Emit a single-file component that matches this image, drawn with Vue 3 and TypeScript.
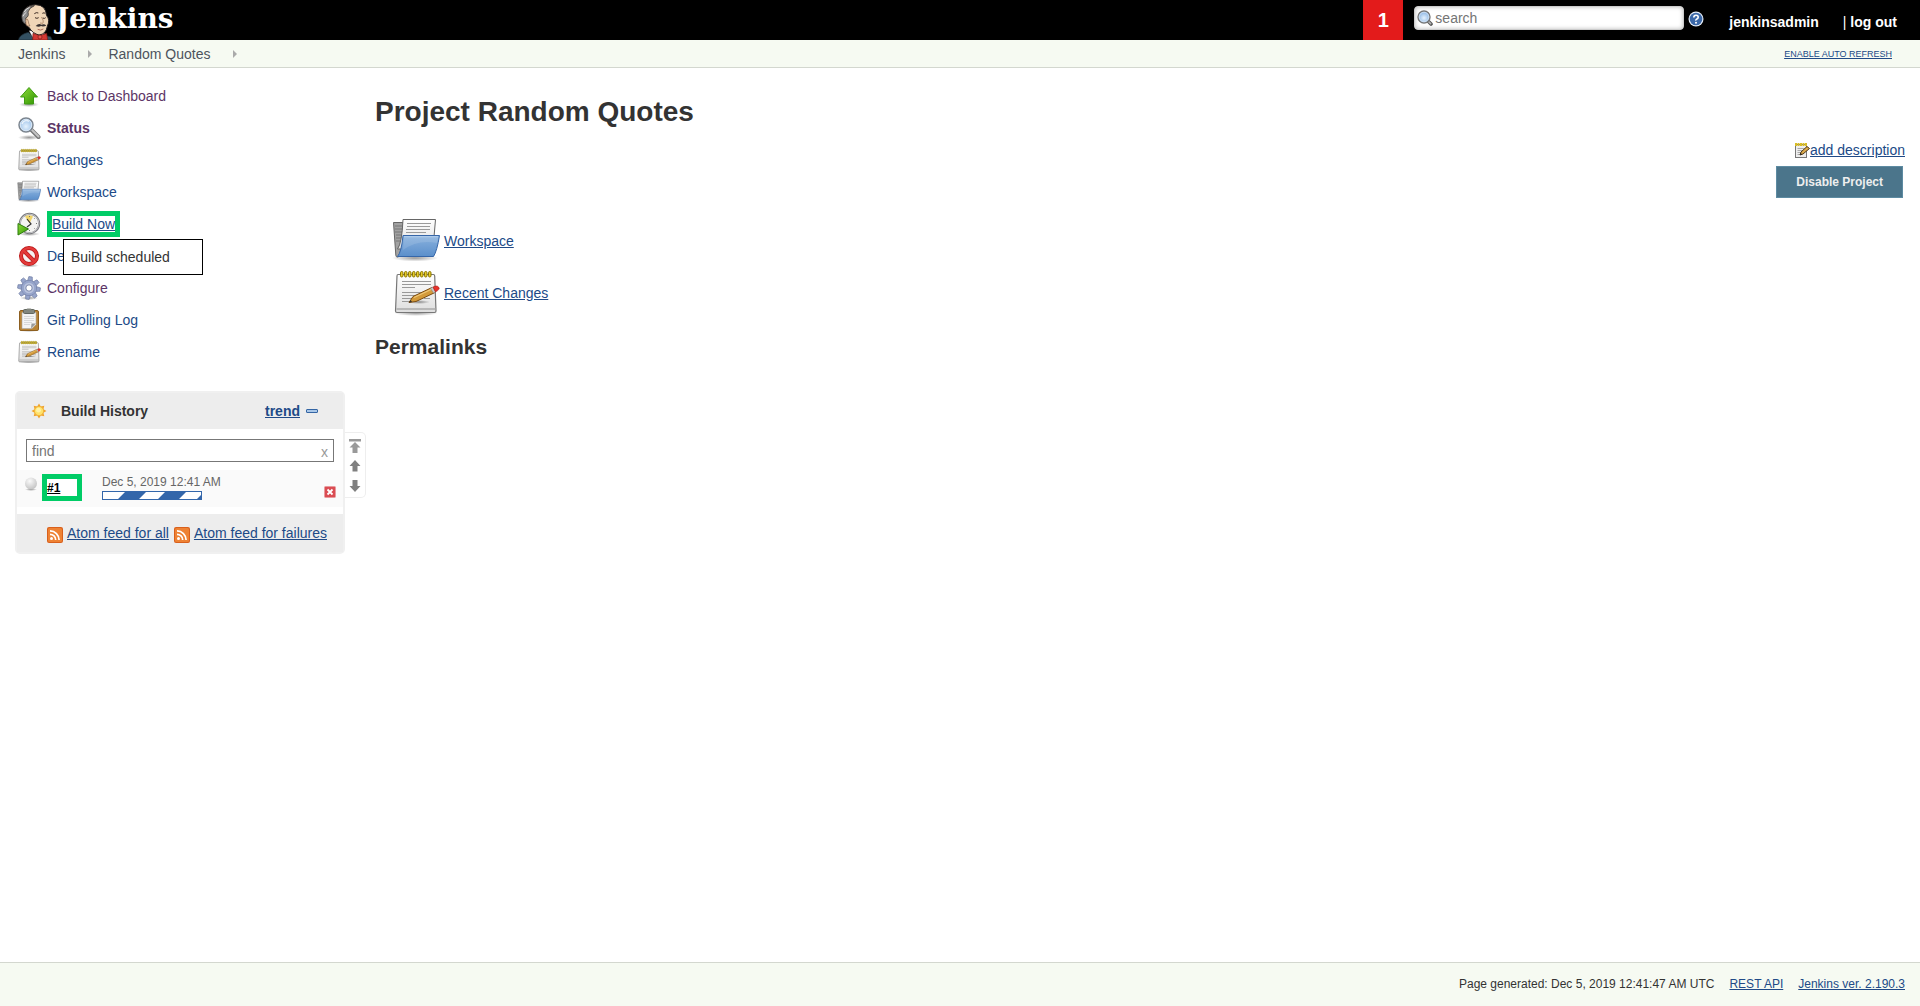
<script setup lang="ts">
import { ref } from 'vue'

interface Task {
  label: string
  icon: string
  visited?: boolean
  current?: boolean
  highlighted?: boolean
  notice?: string
}

const tasks: Task[] = [
  { label: 'Back to Dashboard', icon: 'up', visited: true },
  { label: 'Status', icon: 'search', visited: true, current: true },
  { label: 'Changes', icon: 'notepad' },
  { label: 'Workspace', icon: 'folder' },
  { label: 'Build Now', icon: 'clock', highlighted: true, notice: 'Build scheduled' },
  { label: 'Delete Project', icon: 'delete' },
  { label: 'Configure', icon: 'gear', visited: true },
  { label: 'Git Polling Log', icon: 'clipboard' },
  { label: 'Rename', icon: 'notepad' },
]

const shortcuts = [
  { label: 'Workspace', icon: 'folder' },
  { label: 'Recent Changes', icon: 'notepad' },
]

const feeds = ['Atom feed for all', 'Atom feed for failures']

const query = ref('')
const filter = ref('')
</script>

<template>
  <div class="page">
    <svg class="sprite" aria-hidden="true">
      <defs>
        <linearGradient id="g-green" x1="0" y1="0" x2="1" y2="1">
          <stop offset="0" stop-color="#8fdc3c" /><stop offset="1" stop-color="#2f9400" />
        </linearGradient>
        <linearGradient id="g-blue" x1="0" y1="0" x2="0" y2="1">
          <stop offset="0" stop-color="#8ab2de" /><stop offset="1" stop-color="#5b8fcb" />
        </linearGradient>
        <linearGradient id="g-paper" x1="0" y1="0" x2="0" y2="1">
          <stop offset="0" stop-color="#ffffff" /><stop offset="1" stop-color="#dedede" />
        </linearGradient>
        <radialGradient id="g-lens" cx=".5" cy=".6" r=".6">
          <stop offset="0" stop-color="#e6f2fd" /><stop offset="1" stop-color="#8fb9e6" />
        </radialGradient>
        <radialGradient id="g-ball" cx=".4" cy=".3" r=".7">
          <stop offset="0" stop-color="#fafafa" /><stop offset="1" stop-color="#c4c4c4" />
        </radialGradient>
        <radialGradient id="g-shadow">
          <stop offset="0" stop-color="#000" stop-opacity=".4" /><stop offset="1" stop-color="#000" stop-opacity="0" />
        </radialGradient>
      </defs>

      <symbol id="i-up" viewBox="0 0 24 24">
        <ellipse cx="12" cy="20.5" rx="10" ry="2.5" fill="url(#g-shadow)" />
        <path d="M12 3.5 20.5 13H16.5v7h-9v-7h-4z" fill="url(#g-green)" stroke="#3d9b12" stroke-linejoin="round" />
      </symbol>

      <symbol id="i-search" viewBox="0 0 24 24">
        <ellipse cx="12" cy="21.5" rx="11" ry="2.5" fill="url(#g-shadow)" />
        <path d="M14.5 14 21.5 21" stroke="#777" stroke-width="4" stroke-linecap="round" />
        <path d="M14.5 13.5 21.5 20.5" stroke="#c4c4c4" stroke-width="2" stroke-linecap="round" />
        <circle cx="9" cy="9" r="7" fill="url(#g-lens)" stroke="#7d858e" stroke-width="1.5" />
        <circle cx="9" cy="9" r="5.7" fill="none" stroke="#d9e7f5" />
        <path d="M5 8a4.5 4.5 0 0 1 7-2.5" fill="none" stroke="#fff" stroke-width="1.5" opacity=".7" />
      </symbol>

      <symbol id="i-search-small" viewBox="0 0 16 16">
        <path d="M11 11 14 14" stroke="#555" stroke-width="3.6" stroke-linecap="round" />
        <path d="M11 11 13.6 13.6" stroke="#b5b5b5" stroke-width="1.6" stroke-linecap="round" />
        <circle cx="7" cy="7" r="6" fill="#8fb6e2" stroke="#777" stroke-width="1.4" />
        <circle cx="7" cy="7" r="4.8" fill="url(#g-lens)" stroke="#dbe8f6" stroke-width=".8" />
      </symbol>

      <symbol id="i-notepad" viewBox="0 0 48 48">
        <ellipse cx="24" cy="44" rx="22" ry="3" fill="url(#g-shadow)" />
        <path d="M6 5.5h35.5q1 0 1.2 1.5L44 42q0 1.5-1.5 1.5H5Q3.5 43.5 3.5 42L5 7q0-1.5 1-1.5z" fill="url(#g-paper)" stroke="#777" stroke-width="1.2" />
        <path d="M4.500 40h39" stroke="#aaa" stroke-width="1.5" />
        <path d="M10 12.5h29M10 15.5h29M10 18.5h13M10 23.5h22M10 26.5h18M10 29.5h10M10 32.5h8M32 29.5h6" stroke="#999" />
        <g fill="#e6cb2a" stroke="#8a7500">
          <rect v-for="n in 8" :key="n" :x="4.5 + n * 4" y="2.5" width="2.5" height="5.5" rx="1.2" />
        </g>
        <ellipse cx="27" cy="33" rx="11" ry="2" fill="url(#g-shadow)" />
        <path d="M17 33.500 21 27.500 40 18.500 43 23.500 24 32.500z" fill="#d39a3a" stroke="#7a4a10" />
        <path d="M22 28.500 40.500 19.700" stroke="#f0c878" stroke-width="1.2" />
        <path d="M17 33.500 18.700 31 20 33z" fill="#333" />
        <path d="M38.500 19.200 41 18 43.500 22.900 41.500 24z" fill="#c9c9c9" stroke="#888" stroke-width=".6" />
        <path d="M41 18Q45 16 46.700 18.200T43.500 22.900z" fill="#e8332c" stroke="#a31512" stroke-width=".6" />
      </symbol>

      <symbol id="i-folder" viewBox="0 0 48 48">
        <ellipse cx="23" cy="41" rx="23" ry="3.5" fill="url(#g-shadow)" />
        <path d="M1.500 5.500H11L12 36 6 40H5Q4 40 3.800 38z" fill="#a2a2a2" stroke="#666" />
        <path d="M3 9h7M3 12h7M3 15h7M4 18h7M4 21h6M4 24h5" stroke="#777" />
        <path d="M11 2.500H43.500L42 20 36 32H5.500Q10 26 11 2.500z" fill="url(#g-paper)" stroke="#666" />
        <path d="M15 6.500h24M15 9.500h23M14 12.500h24M14 15.500h20" stroke="#9a9a9a" />
        <path d="M11 18.500H47.500Q45 34 41.500 39.500H5.500Q9.500 35 11 18.500z" fill="url(#g-blue)" stroke="#3666a8" stroke-linejoin="round" />
        <path d="M12 19.700H46" stroke="#b5d0ee" />
        <path d="M11 33Q26 22 45 26L46.500 20H12z" fill="#fff" opacity=".12" />
      </symbol>

      <symbol id="i-clock" viewBox="0 0 24 24">
        <ellipse cx="12" cy="22" rx="11" ry="2" fill="url(#g-shadow)" />
        <circle cx="12.5" cy="11.5" r="9.7" fill="#f4f4f2" stroke="#77787c" stroke-width="2" />
        <circle cx="12.5" cy="11.5" r="9.4" fill="none" stroke="#c4c4c8" />
        <path d="M12.500 11.500 8 4.500a8 8 0 0 1 8 0z" fill="#f0d46a" />
        <path d="M10 7l4 5-4 3" fill="none" stroke="#333" stroke-width="1.200" />
        <path d="M12.500 4v1M20 11.500h-1M12.500 19v-1M17.800 6.200l-.6.6M17.800 16.800l-.6-.6" stroke="#777" />
        <path d="M1 11.500 11.500 17 1 23z" fill="url(#g-green)" stroke="#2c7d0c" stroke-linejoin="round" />
      </symbol>

      <symbol id="i-delete" viewBox="0 0 24 24">
        <ellipse cx="12" cy="21.5" rx="10" ry="2" fill="url(#g-shadow)" />
        <circle cx="12" cy="12" r="8" fill="#f5f0f0" stroke="#b81414" stroke-width="4" />
        <path d="M6.500 6.500 17.500 17.500" stroke="#b81414" stroke-width="4" />
        <circle cx="12" cy="12" r="8" fill="none" stroke="#e33a3a" stroke-width="2.5" />
        <path d="M6.500 6.500 17.500 17.500" stroke="#e33a3a" stroke-width="2.6" />
      </symbol>

      <symbol id="i-gear" viewBox="0 0 24 24">
        <ellipse cx="12" cy="22" rx="9" ry="2" fill="url(#g-shadow)" />
        <g fill="#97a5cb" stroke="#7280a6" stroke-width=".7">
          <path v-for="n in 8" :key="n" d="M9.500 5.500 10.300 .700H13.700L14.500 5.500z" :transform="`rotate(${n * 45 + 8} 12 12)`" />
          <circle cx="12" cy="12" r="7.6" />
        </g>
        <circle cx="12" cy="12" r="7.2" fill="#97a5cb" />
        <circle cx="12" cy="12" r="5.2" fill="#b9c3de" />
        <circle cx="12" cy="12" r="3.2" fill="#fff" stroke="#7a86aa" />
      </symbol>

      <symbol id="i-clipboard" viewBox="0 0 24 24">
        <ellipse cx="12" cy="22.5" rx="11" ry="1.5" fill="url(#g-shadow)" />
        <rect x="2.5" y="2.5" width="19" height="20" rx="1.5" fill="#b98436" stroke="#8d5f20" />
        <path d="M5 4.500h14v12l-4 4H5z" fill="#f4f4f4" stroke="#aaa" stroke-width=".6" />
        <path d="M7 8.500h10M7 10.500h10M7 12.500h10M7 14.500h8M7 16.500h6" stroke="#d0d0d0" stroke-width=".8" />
        <path d="M19 15.500 14 20.500l.5-5z" fill="#999" />
        <rect x="6.5" y="1.5" width="11" height="4" rx="1" fill="#83877f" stroke="#62665f" />
        <rect x="9.500" y=".5" width="5" height="2" rx="1" fill="#83877f" />
      </symbol>

      <symbol id="i-sun" viewBox="0 0 16 16">
        <path d="M8 .5 9.800 3.600 13.300 2.700 12.400 6.200 15.500 8 12.400 9.800 13.300 13.300 9.800 12.400 8 15.500 6.200 12.400 2.700 13.300 3.600 9.800 .5 8 3.600 6.200 2.700 2.700 6.200 3.600z" fill="#f0a32c" />
        <circle cx="8" cy="8" r="4.6" fill="#ffe26a" stroke="#f2b53c" />
        <circle cx="7.5" cy="7.2" r="2.4" fill="#fff2a8" />
      </symbol>

      <symbol id="i-rss" viewBox="0 0 16 16">
        <rect width="16" height="16" rx="2" fill="#d9601c" />
        <rect x="1" y="1" width="14" height="14" rx="1.5" fill="#ee8234" />
        <circle cx="4.500" cy="11.500" r="1.5" fill="#fff" />
        <path d="M3 7.300a5.700 5.700 0 0 1 5.700 5.700M3 3.900a9.100 9.100 0 0 1 9.100 9.100" fill="none" stroke="#fff" stroke-width="1.7" />
      </symbol>
    </svg>

    <header class="header">
      <a class="brand" href="#">
        <svg class="mascot" viewBox="24 0 108 120" aria-hidden="true">
          <path d="M25 120Q28 104 55 97L72 112 104 106 122 110 127 120z" fill="#335061" stroke="#182730" stroke-width="2" />
          <path d="M57 92 68 112 88 118 104 100 92 90z" fill="#fff" stroke="#444" />
          <path d="M40 48Q39 15 77 14Q107 14 110 47Q121 59 112 79Q108 103 87 105Q68 101 57 82Q42 78 40 48z" fill="#f0d6b7" stroke="#231f20" stroke-width="3" />
          <path d="M61 20Q39 23 35 47Q34 63 44 72L50 64 47 54Q58 50 54 36Q57 24 73 17z" fill="#8b8b8b" stroke="#231f20" stroke-width="2" />
          <path d="M43 36Q48 25 59 22M39 49Q41 42 49 37" fill="none" stroke="#dedede" stroke-width="3" />
          <path d="M47 58q7-3 8 6t5 14q-9 3-12-6z" fill="#efc9a5" stroke="#6d4a36" stroke-width="1.5" />
          <path d="M73 41q6-5 12-2M97 40q6-4 9 1M75 53q6 4 11 0M98 54q6 3 9-1" fill="none" stroke="#3b2a22" stroke-width="3" />
          <path d="M94 51q9 13 4 19l-8-1" fill="none" stroke="#9c6f50" stroke-width="2" />
          <path d="M77 78q9-9 17-4 9-4 15 3-10 4-16 1-6 5-16 0z" fill="#3b3433" />
          <path d="M83 88q9 5 17-1" fill="none" stroke="#87372c" stroke-width="2" />
          <path d="M69 100 89 107 110 100 113 120H68z" fill="#d33833" stroke="#701812" stroke-width="2" />
          <circle cx="90" cy="111" r="6" fill="#e9524b" stroke="#701812" stroke-width="2" />
        </svg>
        <span class="brand-name">Jenkins</span>
      </a>
      <div class="header-tools">
        <a class="alerts" href="#">1</a>
        <form class="search" role="search" @submit.prevent>
          <svg class="search-icon" aria-hidden="true"><use href="#i-search-small" /></svg>
          <input v-model="query" class="search-input" type="text" placeholder="search" aria-label="search" />
        </form>
        <a class="help" href="#" aria-label="Search help">
          <svg viewBox="0 0 16 16" width="16" height="16" aria-hidden="true">
            <circle cx="8" cy="8" r="7.500" fill="#e4ecf7" />
            <circle cx="8" cy="8" r="6.300" fill="#3b68a8" />
            <path d="M5.800 6.500Q5.800 4.200 8 4.200T10.200 6.200Q10.200 7.300 8.900 8T8 9.600" fill="none" stroke="#fff" stroke-width="1.6" />
            <circle cx="8" cy="11.700" r="1" fill="#fff" />
          </svg>
        </a>
        <a class="user" href="#">jenkinsadmin</a>
        <span class="logout">|&nbsp;<a href="#">log out</a></span>
      </div>
    </header>

    <nav class="breadcrumbs" aria-label="Breadcrumb">
      <a href="#">Jenkins</a><span class="crumb-arrow"></span>
      <a href="#">Random Quotes</a><span class="crumb-arrow"></span>
      <a class="refresh" href="#">ENABLE AUTO REFRESH</a>
    </nav>

    <div class="body">
      <aside class="side">
        <ul class="tasks">
          <li v-for="task in tasks" :key="task.label" class="task">
            <svg class="task-icon" aria-hidden="true"><use :href="`#i-${task.icon}`" /></svg>
            <a href="#" :class="{ visited: task.visited, current: task.current, highlighted: task.highlighted }">{{ task.label }}</a>
            <div v-if="task.notice" class="tooltip" role="status">{{ task.notice }}</div>
          </li>
        </ul>

        <div class="history-row">
          <section class="history">
            <div class="history-head">
              <svg class="sun" aria-hidden="true"><use href="#i-sun" /></svg>
              <h2>Build History</h2>
              <a class="trend" href="#">trend</a>
              <button class="collapse" type="button" aria-label="collapse"></button>
            </div>
            <div class="find">
              <input v-model="filter" type="text" placeholder="find" aria-label="find" />
              <button type="button" aria-label="Clear" @click="filter = ''">x</button>
            </div>
            <div class="build">
              <svg class="ball" viewBox="0 0 14 14" aria-hidden="true">
                <ellipse cx="7" cy="12.500" rx="6" ry="1.500" fill="url(#g-shadow)" />
                <circle cx="7" cy="6.500" r="6" fill="url(#g-ball)" />
              </svg>
              <a class="build-number" href="#">#1</a>
              <div class="build-info">
                <a href="#">Dec 5, 2019 12:41 AM</a>
                <div class="progress" role="progressbar" aria-label="Build progress">
                  <svg viewBox="0 0 98 7" aria-hidden="true">
                    <path d="M22 0H43L36 7H15zM62 0H83L76 7H55zM98 3V7H94z" fill="#3366aa" />
                  </svg>
                </div>
              </div>
              <button class="stop" type="button" aria-label="Cancel build">
                <svg viewBox="0 0 12 12" width="12" height="12" aria-hidden="true">
                  <rect x=".5" y=".5" width="11" height="11" rx="1" fill="#da4c52" stroke="#e89a9d" />
                  <path d="M3.500 3.500 8.500 8.500M8.500 3.500 3.500 8.500" stroke="#fff" stroke-width="1.8" />
                </svg>
              </button>
            </div>
            <div class="feeds">
              <a v-for="feed in feeds" :key="feed" href="#"><svg aria-hidden="true"><use href="#i-rss" /></svg><span>{{ feed }}</span></a>
            </div>
          </section>
          <div class="pager">
            <button type="button" aria-label="Newest builds">
              <svg viewBox="0 0 12 14" width="12" height="14"><path d="M0 0h12v2.500H0zM6 3l5.500 5.500H8.500V14h-5V8.500H.5z" fill="#999" /></svg>
            </button>
            <button type="button" aria-label="Newer builds">
              <svg viewBox="0 0 12 14" width="12" height="14"><path d="M6 1l5.500 6H8.500v5.500h-5V7H.5z" fill="#808080" /></svg>
            </button>
            <button type="button" aria-label="Older builds">
              <svg viewBox="0 0 12 14" width="12" height="14"><path d="M6 13l5.500-6H8.500V1h-5v6H.5z" fill="#808080" /></svg>
            </button>
          </div>
        </div>
      </aside>

      <main class="main">
        <h1>Project Random Quotes</h1>
        <div class="actions">
          <a class="describe" href="#">
            <svg viewBox="0 0 16 16" aria-hidden="true">
              <rect x="1.500" y="2.500" width="11" height="13" fill="#eee" stroke="#777" />
              <path d="M3.500 6.500h7M3.500 8.500h6M3.500 10.500h4M3.500 12.500h4" stroke="#aaa" />
              <path d="M1 2.500h12" stroke="#d9bd25" stroke-width="3" stroke-dasharray="2 .5" />
              <path d="M6 13 7 10 13 4.500 15.500 6.500 9 12z" fill="#dba94a" stroke="#4d3718" />
              <path d="M6 13l.7-2L8 12.200z" fill="#222" />
            </svg><span>add description</span>
          </a>
          <button class="disable" type="button">Disable Project</button>
        </div>
        <ul class="shortcuts">
          <li v-for="item in shortcuts" :key="item.label">
            <a href="#"><svg aria-hidden="true"><use :href="`#i-${item.icon}`" /></svg><span>{{ item.label }}</span></a>
          </li>
        </ul>
        <h2 class="permalinks">Permalinks</h2>
      </main>
    </div>

    <footer class="footer">
      <span>Page generated: Dec 5, 2019 12:41:47 AM UTC</span>
      <a href="#">REST API</a>
      <a href="#">Jenkins ver. 2.190.3</a>
    </footer>
  </div>
</template>

<style>
body {
  margin: 0;
  background: #fff;
}
</style>

<style scoped>
.page {
  display: flex;
  flex-direction: column;
  min-height: 100vh;
  font: 14px/16px "Liberation Sans", Arial, sans-serif;
  color: #333;
}
.page * {
  box-sizing: border-box;
}
.sprite {
  position: absolute;
  width: 0;
  height: 0;
}
svg {
  display: block;
  flex: none;
}
a {
  color: #204a87;
}
ul {
  margin: 0;
  padding: 0;
  list-style: none;
}
h1,
h2 {
  margin: 0;
}
button {
  padding: 0;
  border: 0;
  background: none;
  font: inherit;
  cursor: pointer;
}

.header {
  display: flex;
  justify-content: space-between;
  height: 40px;
  background: #000;
}
.brand {
  display: flex;
  gap: 2px;
  padding-left: 18px;
  color: #fff;
  text-decoration: none;
}
.mascot {
  width: 36px;
  height: 40px;
}
.brand-name {
  font: bold 28px/38px "DejaVu Serif", Georgia, serif;
}
.header-tools {
  display: flex;
  align-items: flex-start;
  padding-right: 21px;
  color: #fff;
}
.header-tools a {
  color: #fff;
  font-weight: bold;
  text-decoration: none;
}
.header-tools .alerts {
  width: 40px;
  margin-right: 11px;
  background: #e31b1b;
  font-size: 20px;
  line-height: 40px;
  text-align: center;
}
.search {
  display: flex;
  align-items: center;
  width: 270px;
  height: 24px;
  margin-top: 6px;
  padding-left: 2px;
  border: 1px solid #ccc;
  border-radius: 4px;
  background: #fff;
  box-shadow: inset 0 0 4px #bbb;
}
.search-icon {
  width: 16px;
  height: 16px;
}
.search-input {
  flex: 1;
  min-width: 0;
  padding: 0 2px;
  border: 0;
  outline: 0;
  background: none;
  font: inherit;
}
.search-input::placeholder,
.find input::placeholder {
  color: #757575;
}
.help {
  margin: 11px 25px 0 4px;
}
.user {
  margin: 14px 24px 0 0;
}
.logout {
  margin-top: 14px;
}
.logout a {
  padding-right: 2px;
}

.breadcrumbs {
  display: flex;
  align-items: center;
  height: 28px;
  padding: 0 28px 0 18px;
  border-bottom: 1px solid #d3d7cf;
  background: #f6faf2;
}
.breadcrumbs a {
  color: #4d545d;
  text-decoration: none;
}
.crumb-arrow {
  margin: 0 16px 0 23px;
  border: 4px solid transparent;
  border-right-width: 0;
  border-left-color: #aaa;
}
.breadcrumbs .refresh {
  margin-left: auto;
  color: #204a87;
  font-size: 9px;
  text-decoration: underline;
}

.body {
  display: flex;
  flex: 1;
}
.side {
  flex: 0 0 375px;
  padding: 12px 0 24px 15px;
}
.task {
  position: relative;
  display: flex;
  align-items: center;
  gap: 6px;
  height: 32px;
  padding-left: 2px;
}
.task-icon {
  width: 24px;
  height: 24px;
}
.task a {
  text-decoration: none;
}
.task .visited {
  color: #5c3566;
}
.task .current {
  font-weight: bold;
}
.task .highlighted {
  border: 5px solid #00cc66;
  text-decoration: underline;
}
.tooltip {
  position: absolute;
  z-index: 1;
  top: 31px;
  left: 48px;
  width: 140px;
  padding: 9px 7px;
  border: 1px solid #000;
  background: #fff;
}

.history-row {
  display: flex;
  align-items: flex-start;
  margin-top: 23px;
}
.history {
  width: 330px;
  border: 2px solid #f0f0f0;
  border-radius: 5px;
}
.history-head {
  display: flex;
  align-items: center;
  height: 36px;
  padding: 0 25px 0 14px;
  background: #ededed;
}
.sun {
  width: 16px;
  height: 16px;
}
.history-head h2 {
  margin-left: 14px;
  font-size: 14px;
}
.trend {
  margin-left: auto;
  font-weight: bold;
}
.collapse {
  width: 12px;
  height: 4px;
  margin-left: 6px;
  border: 1px solid #3465a4;
  border-radius: 1px;
  background: #a9c7e8;
}
.find {
  display: flex;
  margin: 10px 9px 8px;
  border: 1px solid #777;
}
.find input {
  flex: 1;
  min-width: 0;
  height: 21px;
  padding: 0 5px;
  border: 0;
  outline: 0;
  font: inherit;
}
.find button {
  padding: 3px 5px 0;
  color: #999;
}
.build {
  display: flex;
  align-items: flex-start;
  height: 37px;
  padding: 4px 7px 0;
  background: #fafafa;
}
.ball {
  width: 14px;
  height: 14px;
  margin-top: 3px;
}
.build-number {
  width: 40px;
  height: 27px;
  margin: 0 20px 0 4px;
  border: 5px solid #00cc66;
  background: #fff;
  color: #000;
  font-size: 12px;
  font-weight: bold;
  line-height: 18px;
}
.build-info a {
  display: block;
  color: #666;
  font-size: 12px;
  line-height: 17px;
  text-decoration: none;
}
.progress {
  width: 100px;
  border: 1px solid #3366aa;
  background: #fff;
}
.stop {
  margin: 12px 0 0 auto;
}
.feeds {
  display: flex;
  gap: 5px;
  height: 38px;
  margin-top: 7px;
  padding: 11px 0 0 30px;
  background: #ededed;
}
.feeds a {
  display: flex;
  gap: 4px;
  text-decoration: none;
}
.feeds svg {
  width: 16px;
  height: 16px;
  margin-top: 2px;
}
.feeds span {
  text-decoration: underline;
}
.pager {
  display: flex;
  flex-direction: column;
  gap: 6px;
  width: 21px;
  height: 66px;
  margin-top: 41px;
  padding: 6px 4px;
  border: 1px solid #eee;
  border-left: 0;
  border-radius: 0 5px 5px 0;
}

.main {
  flex: 1;
  min-width: 0;
  padding: 28px 15px 24px 0;
}
h1 {
  font-size: 28px;
  line-height: 32px;
}
.actions {
  display: flex;
  flex-direction: column;
  align-items: flex-end;
  gap: 8px;
  margin: 14px 0 19px;
}
.describe {
  display: flex;
  text-decoration: none;
}
.describe svg {
  width: 16px;
  height: 16px;
}
.describe span,
.shortcuts span {
  text-decoration: underline;
}
.disable {
  height: 32px;
  margin-right: 2px;
  padding: 0 19px;
  border: 1px solid #5d8ba2;
  background: #4b758b;
  color: #eee;
  font-size: 12px;
  font-weight: bold;
}
.shortcuts {
  display: flex;
  flex-direction: column;
  gap: 4px;
  padding-left: 17px;
}
.shortcuts a {
  display: inline-flex;
  align-items: center;
  gap: 4px;
  vertical-align: top;
  text-decoration: none;
}
.shortcuts svg {
  width: 48px;
  height: 48px;
}
.permalinks {
  margin-top: 18px;
  font-size: 21px;
  line-height: 24px;
}

.footer {
  display: flex;
  justify-content: flex-end;
  gap: 15px;
  height: 44px;
  padding: 13px 15px;
  border-top: 1px solid #d3d7cf;
  background: #f6faf2;
  font-size: 12px;
}
</style>
